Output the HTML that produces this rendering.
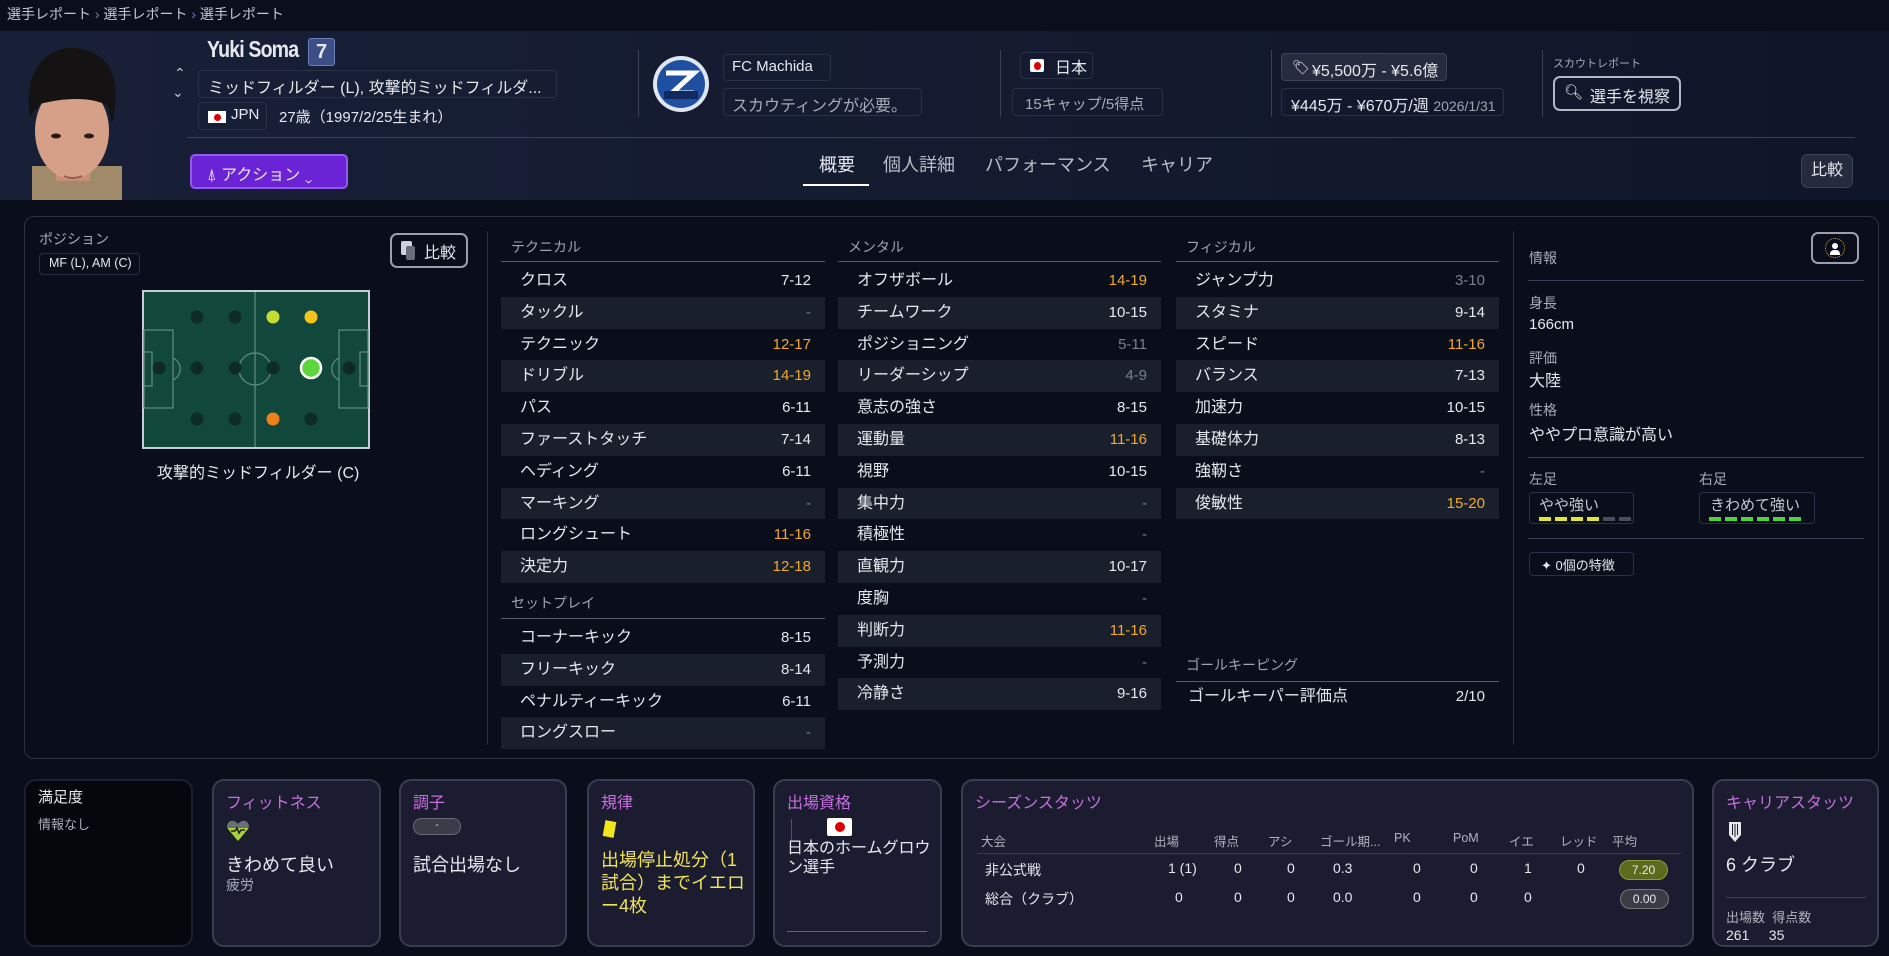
<!DOCTYPE html>
<html><head><meta charset="utf-8">
<style>
*{margin:0;padding:0;box-sizing:border-box}
body{width:1889px;height:956px;background:#0a0e1a;font-family:"Liberation Sans","Noto Sans CJK JP",sans-serif;color:#e6e8ee;position:relative;overflow:hidden}
.a{position:absolute;white-space:nowrap}
.box{position:absolute;border:1px solid #2a3046;border-radius:4px}
.vs{position:absolute;width:1px;background:#3a4058}
.row{position:absolute;height:31.8px;font-size:16px;line-height:31.8px}
.row .l{position:absolute;left:19px}
.row .v{position:absolute;right:14px;font-size:15px}
.s{background:#1a1f2c}
.o{color:#f0a92e}.g{color:#7a7f8c}
.hd{position:absolute;font-size:14px;color:#a0a4b0}
.hl{position:absolute;height:1px;background:#555b6b}
.card{position:absolute;top:779px;height:168px;background:#1b1c30;border:2px solid #3a3c50;border-radius:12px}
.ct{position:absolute;left:12px;top:8px;font-size:16px;color:#c86fe0}
.th{position:absolute;top:50px;font-size:12.5px;color:#b0b3bd}
.td{position:absolute;font-size:14px;color:#e6e8ee}
</style></head><body>
<div class="a" style="left:0;top:0;width:1889px;height:31px;background:#0b0f1c"></div>
<div class="a" style="left:7px;top:4px;font-size:14px;color:#c4c7d0">選手レポート <span style="color:#888">›</span> 選手レポート <span style="color:#8b6cf0">›</span> 選手レポート</div>
<div class="a" style="left:0;top:31px;width:1889px;height:169px;background:linear-gradient(90deg,#182038,#131a2e 60%,#10162a)"></div>
<svg class="a" style="left:12px;top:46px" width="118" height="154" viewBox="0 0 118 154">
<rect x="20" y="120" width="90" height="40" fill="#a08a6a"/>
<rect x="44" y="105" width="34" height="30" fill="#c98f74"/>
<ellipse cx="60" cy="85" rx="37" ry="48" fill="#d6a088"/>
<path d="M18 70 C10 20 40 0 62 2 C95 4 112 30 100 78 L96 60 C80 50 50 52 28 58 Z" fill="#141212"/>
<ellipse cx="44" cy="90" rx="5" ry="2.5" fill="#2a1a14"/><ellipse cx="77" cy="90" rx="5" ry="2.5" fill="#2a1a14"/>
<path d="M52 130 Q60 134 70 130" stroke="#9a5a4a" stroke-width="2" fill="none"/>
</svg>
<div class="a" style="left:174px;top:65px;font-size:14px;color:#ccc">⌃</div>
<div class="a" style="left:172px;top:84px;font-size:14px;color:#ccc">⌄</div>
<div class="a" style="left:207px;top:36px;font-size:23px;font-weight:bold;letter-spacing:-1px;transform:scaleX(.85);transform-origin:left">Yuki Soma</div>
<div class="a" style="left:308px;top:38px;width:27px;height:28px;background:#3b4e86;border:1px solid #6c7fb8;border-radius:3px;text-align:center;font-size:20px;font-weight:bold;line-height:26px">7</div>
<div class="box" style="left:198px;top:70px;width:359px;height:28px"></div>
<div class="a" style="left:208px;top:74px;font-size:16px">ミッドフィルダー (L), 攻撃的ミッドフィルダ...</div>
<div class="box" style="left:198px;top:102px;width:69px;height:28px"></div>
<div class="a" style="left:208px;top:111px;width:18px;height:12px;background:#fff"><div style="width:7px;height:7px;border-radius:50%;background:#d00;margin:2.5px auto"></div></div>
<div class="a" style="left:231px;top:106px;font-size:15px">JPN</div>
<div class="a" style="left:279px;top:106px;font-size:15px">27歳（1997/2/25生まれ）</div>
<div class="vs" style="left:638px;top:50px;height:67px"></div>
<svg class="a" style="left:652px;top:55px" width="58" height="58" viewBox="0 0 58 58"><circle cx="29" cy="29" r="28" fill="#dfe6f0"/><circle cx="29" cy="29" r="24" fill="#1e4fa0"/><path d="M14 18h28l-22 20h22" stroke="#fff" stroke-width="5" fill="none"/><rect x="12" y="36" width="34" height="8" fill="#102a60"/></svg>
<div class="box" style="left:723px;top:54px;width:108px;height:27px"></div>
<div class="a" style="left:732px;top:58px;font-size:15px">FC Machida</div>
<div class="box" style="left:723px;top:88px;width:199px;height:28px"></div>
<div class="a" style="left:732px;top:92px;font-size:16px;color:#a8acb8">スカウティングが必要。</div>
<div class="vs" style="left:1000px;top:50px;height:67px"></div>
<div class="box" style="left:1020px;top:52px;width:73px;height:27px"></div>
<div class="a" style="left:1030px;top:59px;width:14px;height:13px;background:#fff;border-radius:2px"><div style="width:7px;height:8px;border-radius:50%;background:#d00;margin:2.5px auto"></div></div>
<div class="a" style="left:1055px;top:54px;font-size:16px">日本</div>
<div class="box" style="left:1012px;top:88px;width:151px;height:28px"></div>
<div class="a" style="left:1025px;top:93px;font-size:15px;color:#a8acb8">15キャップ/5得点</div>
<div class="vs" style="left:1271px;top:50px;height:67px"></div>
<div class="a" style="left:1281px;top:53px;width:166px;height:28px;background:#262b3e;border:1px solid #3c4258;border-radius:4px"></div>
<div class="a" style="left:1292px;top:59px;font-size:14px">🏷</div>
<div class="a" style="left:1312px;top:57px;font-size:16px">¥5,500万 - ¥5.6億</div>
<div class="box" style="left:1281px;top:88px;width:223px;height:28px"></div>
<div class="a" style="left:1291px;top:92px;font-size:16px">¥445万 - ¥670万/週 <span style="font-size:14px;color:#a0a4b0">2026/1/31</span></div>
<div class="vs" style="left:1542px;top:50px;height:67px"></div>
<div class="a" style="left:1553px;top:55px;font-size:11px;color:#a8acb8">スカウトレポート</div>
<div class="a" style="left:1553px;top:76px;width:128px;height:35px;border:2px solid #b4b8c6;border-radius:7px"></div>
<div class="a" style="left:1564px;top:83px;font-size:15px">🔍︎</div>
<div class="a" style="left:1590px;top:83px;font-size:16px">選手を視察</div>
<div class="hl" style="left:187px;top:137px;width:1668px;background:#3a4058"></div>
<div class="a" style="left:190px;top:154px;width:158px;height:35px;background:#6a24d6;border:2px solid #9559f0;border-radius:5px"></div>
<div class="a" style="left:207px;top:161px;font-size:16px">⍋ アクション ⌄</div>
<div class="a" style="left:819px;top:151px;font-size:18px">概要</div>
<div class="a" style="left:803px;top:184px;width:66px;height:2px;background:#fff"></div>
<div class="a" style="left:883px;top:151px;font-size:18px;color:#b8bcc6">個人詳細</div>
<div class="a" style="left:985px;top:151px;font-size:18px;color:#b8bcc6">パフォーマンス</div>
<div class="a" style="left:1141px;top:151px;font-size:18px;color:#b8bcc6">キャリア</div>
<div class="a" style="left:1801px;top:154px;width:52px;height:34px;background:#252a3c;border:1px solid #3c4258;border-radius:7px;text-align:center;line-height:32px;font-size:16px">比較</div>
<div class="a" style="left:0;top:200px;width:1889px;height:16px;background:#0a0e1a"></div>
<div class="a" style="left:24px;top:216px;width:1855px;height:543px;border:1px solid #2c3244;border-radius:10px;background:#0a0e1a"></div>
<div class="a" style="left:39px;top:229px;font-size:14px;color:#a8acb8">ポジション</div>
<div class="box" style="left:39px;top:253px;width:101px;height:22px"></div>
<div class="a" style="left:49px;top:256px;font-size:12.5px">MF (L), AM (C)</div>
<div class="a" style="left:390px;top:233px;width:78px;height:35px;border:2px solid #9ca0ae;border-radius:7px"></div>
<div class="a" style="left:401px;top:241px;width:11px;height:14px;background:#cfd2dc;border-radius:2px"></div>
<div class="a" style="left:406px;top:246px;width:9px;height:14px;background:#6a6e7c;border-radius:2px"></div>
<div class="a" style="left:424px;top:239px;font-size:16px">比較</div>
<svg class="a" style="left:142px;top:290px" width="228" height="159" viewBox="0 0 228 159">
<rect x="1" y="1" width="226" height="157" fill="#11483b" stroke="#c8ccd4" stroke-width="2"/>
<g stroke="#5f8f80" stroke-width="1.2" fill="none">
<line x1="113" y1="2" x2="113" y2="157"/><circle cx="113" cy="79" r="16"/>
<rect x="2" y="40" width="29" height="78"/><rect x="2" y="62" width="8" height="34"/><path d="M31 68 A12 12 0 0 1 31 90"/>
<rect x="197" y="40" width="29" height="78"/><rect x="218" y="62" width="8" height="34"/><path d="M197 68 A12 12 0 0 0 197 90"/>
</g>
<g fill="#0f2b27">
<circle cx="55" cy="27" r="6.5"/><circle cx="93" cy="27" r="6.5"/>
<circle cx="17" cy="78" r="6.5"/><circle cx="55" cy="78" r="6.5"/><circle cx="93" cy="78" r="6.5"/><circle cx="131" cy="78" r="6.5"/><circle cx="207" cy="78" r="6.5"/>
<circle cx="55" cy="129" r="6.5"/><circle cx="93" cy="129" r="6.5"/><circle cx="169" cy="129" r="6.5"/>
</g>
<circle cx="131" cy="27" r="6.5" fill="#c6dc34"/><circle cx="169" cy="27" r="6.5" fill="#f4c21c"/>
<circle cx="131" cy="129" r="6.5" fill="#f0801c"/>
<circle cx="169" cy="78" r="10" fill="#5dd53c" stroke="#fff" stroke-width="2.5"/>
</svg>
<div class="a" style="left:157px;top:459px;font-size:16px">攻撃的ミッドフィルダー (C)</div>
<div class="vs" style="left:487px;top:231px;height:514px;background:#2c3244"></div>
<div class="vs" style="left:1513px;top:231px;height:514px;background:#2c3244"></div>

<div class="hd" style="left:511px;top:237px">テクニカル</div>
<div class="hl" style="left:501px;top:261px;width:324px"></div>
<div class="row" style="left:501px;top:265px;width:324px"><span class="l">クロス</span><span class="v">7-12</span></div>
<div class="row s" style="left:501px;top:296.8px;width:324px"><span class="l">タックル</span><span class="v g">-</span></div>
<div class="row" style="left:501px;top:328.6px;width:324px"><span class="l">テクニック</span><span class="v o">12-17</span></div>
<div class="row s" style="left:501px;top:360.4px;width:324px"><span class="l">ドリブル</span><span class="v o">14-19</span></div>
<div class="row" style="left:501px;top:392.2px;width:324px"><span class="l">パス</span><span class="v">6-11</span></div>
<div class="row s" style="left:501px;top:424px;width:324px"><span class="l">ファーストタッチ</span><span class="v">7-14</span></div>
<div class="row" style="left:501px;top:455.8px;width:324px"><span class="l">ヘディング</span><span class="v">6-11</span></div>
<div class="row s" style="left:501px;top:487.6px;width:324px"><span class="l">マーキング</span><span class="v g">-</span></div>
<div class="row" style="left:501px;top:519.4px;width:324px"><span class="l">ロングシュート</span><span class="v o">11-16</span></div>
<div class="row s" style="left:501px;top:551.2px;width:324px"><span class="l">決定力</span><span class="v o">12-18</span></div>
<div class="hd" style="left:511px;top:593px">セットプレイ</div>
<div class="hl" style="left:501px;top:618px;width:324px"></div>
<div class="row" style="left:501px;top:622px;width:324px"><span class="l">コーナーキック</span><span class="v">8-15</span></div>
<div class="row s" style="left:501px;top:653.8px;width:324px"><span class="l">フリーキック</span><span class="v">8-14</span></div>
<div class="row" style="left:501px;top:685.6px;width:324px"><span class="l">ペナルティーキック</span><span class="v">6-11</span></div>
<div class="row s" style="left:501px;top:717.4px;width:324px"><span class="l">ロングスロー</span><span class="v g">-</span></div>

<div class="hd" style="left:848px;top:237px">メンタル</div>
<div class="hl" style="left:838px;top:261px;width:323px"></div>
<div class="row" style="left:838px;top:265px;width:323px"><span class="l">オフザボール</span><span class="v o">14-19</span></div>
<div class="row s" style="left:838px;top:296.8px;width:323px"><span class="l">チームワーク</span><span class="v">10-15</span></div>
<div class="row" style="left:838px;top:328.6px;width:323px"><span class="l">ポジショニング</span><span class="v g">5-11</span></div>
<div class="row s" style="left:838px;top:360.4px;width:323px"><span class="l">リーダーシップ</span><span class="v g">4-9</span></div>
<div class="row" style="left:838px;top:392.2px;width:323px"><span class="l">意志の強さ</span><span class="v">8-15</span></div>
<div class="row s" style="left:838px;top:424px;width:323px"><span class="l">運動量</span><span class="v o">11-16</span></div>
<div class="row" style="left:838px;top:455.8px;width:323px"><span class="l">視野</span><span class="v">10-15</span></div>
<div class="row s" style="left:838px;top:487.6px;width:323px"><span class="l">集中力</span><span class="v g">-</span></div>
<div class="row" style="left:838px;top:519.4px;width:323px"><span class="l">積極性</span><span class="v g">-</span></div>
<div class="row s" style="left:838px;top:551.2px;width:323px"><span class="l">直観力</span><span class="v">10-17</span></div>
<div class="row" style="left:838px;top:583px;width:323px"><span class="l">度胸</span><span class="v g">-</span></div>
<div class="row s" style="left:838px;top:614.8px;width:323px"><span class="l">判断力</span><span class="v o">11-16</span></div>
<div class="row" style="left:838px;top:646.6px;width:323px"><span class="l">予測力</span><span class="v g">-</span></div>
<div class="row s" style="left:838px;top:678.4px;width:323px"><span class="l">冷静さ</span><span class="v">9-16</span></div>

<div class="hd" style="left:1186px;top:237px">フィジカル</div>
<div class="hl" style="left:1176px;top:261px;width:323px"></div>
<div class="row" style="left:1176px;top:265px;width:323px"><span class="l">ジャンプ力</span><span class="v g">3-10</span></div>
<div class="row s" style="left:1176px;top:296.8px;width:323px"><span class="l">スタミナ</span><span class="v">9-14</span></div>
<div class="row" style="left:1176px;top:328.6px;width:323px"><span class="l">スピード</span><span class="v o">11-16</span></div>
<div class="row s" style="left:1176px;top:360.4px;width:323px"><span class="l">バランス</span><span class="v">7-13</span></div>
<div class="row" style="left:1176px;top:392.2px;width:323px"><span class="l">加速力</span><span class="v">10-15</span></div>
<div class="row s" style="left:1176px;top:424px;width:323px"><span class="l">基礎体力</span><span class="v">8-13</span></div>
<div class="row" style="left:1176px;top:455.8px;width:323px"><span class="l">強靭さ</span><span class="v g">-</span></div>
<div class="row s" style="left:1176px;top:487.6px;width:323px"><span class="l">俊敏性</span><span class="v o">15-20</span></div>
<div class="hd" style="left:1186px;top:655px">ゴールキーピング</div>
<div class="hl" style="left:1176px;top:681px;width:323px"></div>
<div class="row" style="left:1176px;top:681px;width:323px"><span class="l" style="left:12px">ゴールキーパー評価点</span><span class="v">2/10</span></div>

<div class="a" style="left:1529px;top:248px;font-size:14px;color:#a8acb8">情報</div>
<div class="a" style="left:1811px;top:232px;width:48px;height:32px;border:2px solid #9ca0ae;border-radius:7px"></div>
<div class="a" style="left:1825px;top:238px;width:20px;height:20px;border:1.5px dotted #e0a040;border-radius:50%"></div>
<div class="a" style="left:1832px;top:243px;width:6px;height:6px;background:#fff;border-radius:50%"></div>
<div class="a" style="left:1830px;top:250px;width:10px;height:5px;background:#fff;border-radius:4px 4px 0 0"></div>
<div class="hl" style="left:1528px;top:280px;width:336px;background:#3a4058"></div>
<div class="a" style="left:1529px;top:293px;font-size:14px;color:#a8acb8">身長</div>
<div class="a" style="left:1529px;top:316px;font-size:15px">166cm</div>
<div class="a" style="left:1529px;top:348px;font-size:14px;color:#a8acb8">評価</div>
<div class="a" style="left:1529px;top:367px;font-size:16px">大陸</div>
<div class="a" style="left:1529px;top:400px;font-size:14px;color:#a8acb8">性格</div>
<div class="a" style="left:1529px;top:421px;font-size:16px">ややプロ意識が高い</div>
<div class="hl" style="left:1528px;top:457px;width:336px;background:#3a4058"></div>
<div class="a" style="left:1529px;top:469px;font-size:14px;color:#a8acb8">左足</div>
<div class="a" style="left:1699px;top:469px;font-size:14px;color:#a8acb8">右足</div>
<div class="box" style="left:1529px;top:492px;width:105px;height:32px"></div>
<div class="a" style="left:1539px;top:494px;font-size:15px;color:#c4c7d0">やや強い</div>
<div class="a" style="left:1539px;top:517px;display:flex;gap:4px"><i style="width:12px;height:4px;background:#e4e62a"></i><i style="width:12px;height:4px;background:#e4e62a"></i><i style="width:12px;height:4px;background:#e4e62a"></i><i style="width:12px;height:4px;background:#e4e62a"></i><i style="width:12px;height:4px;background:#4a4e5c"></i><i style="width:12px;height:4px;background:#4a4e5c"></i></div>
<div class="box" style="left:1699px;top:492px;width:116px;height:32px"></div>
<div class="a" style="left:1710px;top:494px;font-size:15px;color:#c4c7d0">きわめて強い</div>
<div class="a" style="left:1709px;top:517px;display:flex;gap:4px"><i style="width:12px;height:4px;background:#4fd23a"></i><i style="width:12px;height:4px;background:#4fd23a"></i><i style="width:12px;height:4px;background:#4fd23a"></i><i style="width:12px;height:4px;background:#4fd23a"></i><i style="width:12px;height:4px;background:#4fd23a"></i><i style="width:12px;height:4px;background:#4fd23a"></i></div>
<div class="hl" style="left:1528px;top:538px;width:336px;background:#3a4058"></div>
<div class="box" style="left:1529px;top:552px;width:105px;height:24px"></div>
<div class="a" style="left:1541px;top:555px;font-size:13px">✦ 0個の特徴</div>

<div class="card" style="left:24px;width:169px;background:#05070d;border-color:#1c2030"></div>
<div class="a" style="left:38px;top:786px;font-size:15px">満足度</div>
<div class="a" style="left:38px;top:814px;font-size:13px;color:#a8acb8">情報なし</div>

<div class="card" style="left:212px;width:169px"><div class="ct">フィットネス</div>
<svg class="a" style="left:12px;top:38px" width="24" height="24" viewBox="0 0 24 24"><path d="M12 22 L2 10 C0 6 3 1 7 2 C9 2 11 4 12 5 C13 4 15 2 17 2 C21 1 24 6 22 10 Z" fill="#a5d33a"/><path d="M2 9 C1 5 4 1 7 2 C9 2 11 4 12 5 C13 4 15 2 17 2 C21 1 23 5 22 9 Z" fill="#6a6e78"/><path d="M5 12h4l2-3 2 5 2-3h4" stroke="#222" stroke-width="1.6" fill="none"/></svg>
<div class="a" style="left:12px;top:70px;font-size:18px">きわめて良い</div>
<div class="a" style="left:12px;top:94px;font-size:14px;color:#a8acb8">疲労</div></div>

<div class="card" style="left:399px;width:168px"><div class="ct">調子</div>
<div class="a" style="left:12px;top:37px;width:48px;height:17px;background:#3a3d48;border:1px solid #666a78;border-radius:8px;text-align:center;font-size:10px;line-height:14px">-</div>
<div class="a" style="left:12px;top:70px;font-size:18px">試合出場なし</div></div>

<div class="card" style="left:587px;width:168px"><div class="ct">規律</div>
<div class="a" style="left:15px;top:40px;width:11px;height:16px;background:#f2e51c;transform:rotate(10deg)"></div>
<div class="a" style="left:12px;top:68px;font-size:18px;line-height:23px;color:#f0e45a;white-space:normal;width:150px">出場停止処分（1試合）までイエロー4枚</div></div>

<div class="card" style="left:773px;width:169px"><div class="ct">出場資格</div>
<div class="a" style="left:16px;top:38px;width:1px;height:22px;background:#555"></div>
<div class="a" style="left:52px;top:37px;width:25px;height:18px;background:#fff;border-radius:2px"><div style="width:10px;height:10px;border-radius:50%;background:#d00;margin:4px auto"></div></div>
<div class="a" style="left:12px;top:58px;font-size:16px;line-height:19px;white-space:normal;width:150px">日本のホームグロウン選手</div>
<div class="a" style="left:12px;top:150px;width:140px;height:1px;background:#666"></div></div>

<div class="card" style="left:961px;width:733px"><div class="ct">シーズンスタッツ</div>
<div class="th" style="left:18px">大会</div><div class="th" style="left:191px">出場</div><div class="th" style="left:251px">得点</div><div class="th" style="left:305px">アシ</div><div class="th" style="left:357px">ゴール期...</div><div class="th" style="left:431px">PK</div><div class="th" style="left:490px">PoM</div><div class="th" style="left:546px">イエ</div><div class="th" style="left:597px">レッド</div><div class="th" style="left:649px">平均</div>
<div class="a" style="left:14px;top:72px;width:704px;height:1px;background:#3a3d50"></div>
<div class="td" style="left:22px;top:79px">非公式戦</div>
<div class="td" style="left:205px;top:79px">1 (1)</div><div class="td" style="left:271px;top:79px">0</div><div class="td" style="left:324px;top:79px">0</div><div class="td" style="left:370px;top:79px">0.3</div><div class="td" style="left:450px;top:79px">0</div><div class="td" style="left:507px;top:79px">0</div><div class="td" style="left:561px;top:79px">1</div><div class="td" style="left:614px;top:79px">0</div>
<div class="a" style="left:656px;top:79px;width:49px;height:20px;background:#5c6a1c;border:1px solid #8a9a3a;border-radius:10px;text-align:center;font-size:12px;line-height:18px">7.20</div>
<div class="td" style="left:22px;top:108px">総合（クラブ）</div>
<div class="td" style="left:212px;top:108px">0</div><div class="td" style="left:271px;top:108px">0</div><div class="td" style="left:324px;top:108px">0</div><div class="td" style="left:370px;top:108px">0.0</div><div class="td" style="left:450px;top:108px">0</div><div class="td" style="left:507px;top:108px">0</div><div class="td" style="left:561px;top:108px">0</div>
<div class="a" style="left:657px;top:108px;width:49px;height:20px;background:#3a3b44;border:1px solid #777;border-radius:10px;text-align:center;font-size:12px;line-height:18px">0.00</div></div>

<div class="card" style="left:1712px;width:167px"><div class="ct">キャリアスタッツ</div>
<svg class="a" style="left:14px;top:40px" width="14" height="22" viewBox="0 0 14 22"><path d="M1 1h12v13l-6 7-6-7z" fill="#e6e8ee"/><path d="M4.5 3v11M7 3v13M9.5 3v11" stroke="#1b1c30" stroke-width="1"/></svg>
<div class="a" style="left:12px;top:70px;font-size:18px">6 クラブ</div>
<div class="a" style="left:12px;top:116px;width:140px;height:1px;background:#444"></div>
<div class="a" style="left:12px;top:126px;font-size:13px;color:#b0b3bd">出場数 &nbsp;得点数</div>
<div class="a" style="left:12px;top:146px;font-size:14px">261 &nbsp;&nbsp;&nbsp;&nbsp;35</div></div>
</body></html>
